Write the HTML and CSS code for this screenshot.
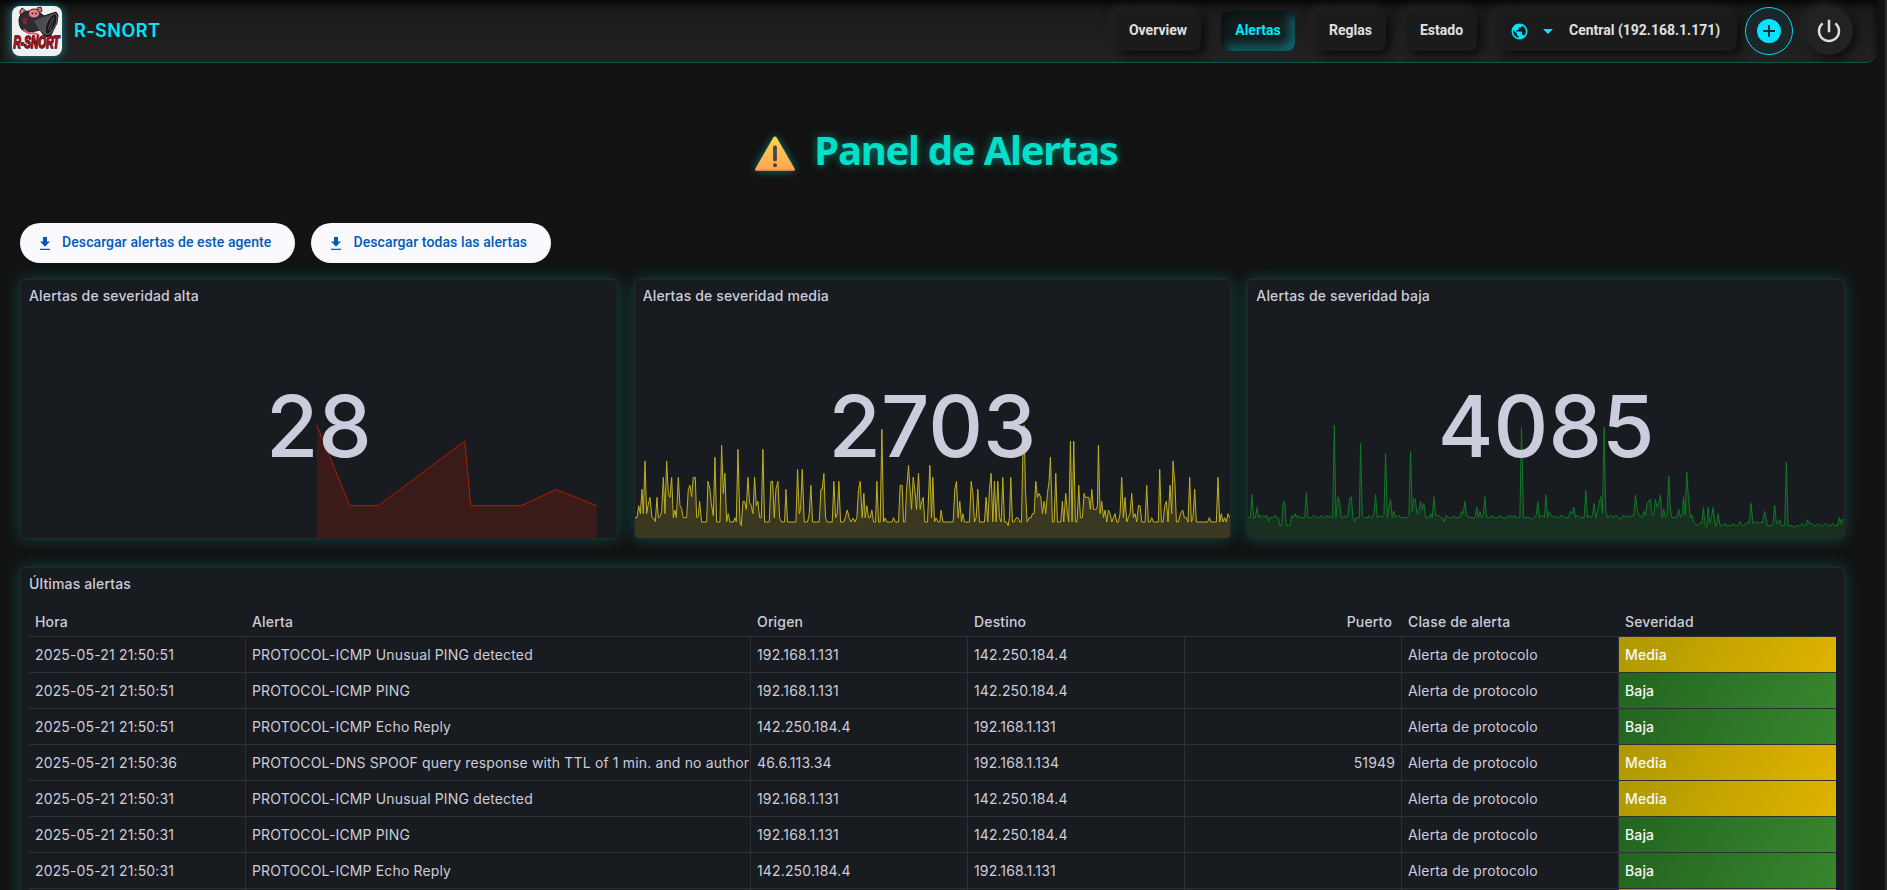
FILE: index.html
```html
<!DOCTYPE html>
<html lang="es">
<head>
<meta charset="utf-8">
<title>R-SNORT - Panel de Alertas</title>
<link rel="stylesheet" href="styles.css">
</head>
<body>
<header class="topbar">
  <div class="brand">
    <svg class="logo" viewBox="0 0 50 50" width="50" height="50">
      <path d="M8 5l2-3 4 3 2 3-6 2-2-2zM25 2l4-1 1 4-3 2z" fill="#e07078" stroke="#3a2428"/>
      <path d="M7 14c0-5 5-9 10-9l10 1 5 4 12-4 2 3-1 8-6 12-6 2-5-7-4 1-8 1c-6 0-9-5-9-12z" fill="#2c2b30" stroke="#151418"/>
      <ellipse cx="22" cy="7.500" rx="5.500" ry="4.500" fill="#e8808a" stroke="#3a2428"/>
      <circle cx="20.500" cy="7.500" r="1" fill="#50202c"/><circle cx="24" cy="7.500" r="1" fill="#50202c"/>
      <path d="M22 15l9-4 10-3-4 12-4 9-6-5z" fill="#4b4c52"/>
      <ellipse cx="39" cy="18" rx="4.500" ry="11" transform="rotate(24 39 18)" fill="#19191c" stroke="#62636a"/>
      <path d="M38 25l4-14M36 24l4-12" stroke="#55565c" stroke-width=".8"/>
      <path d="M11 12h4v6h-4z" fill="#8c2028"/>
      <path d="M12 23c1 3 5 5 9 4l6 2" fill="none" stroke="#d06068" stroke-width="2"/>
      <text class="logo-text" x="1.500" y="42" textLength="46" lengthAdjust="spacingAndGlyphs">R-SNORT</text>
    </svg>
    <span class="brand-name">R-SNORT</span>
  </div>
  <nav class="nav">
    <a class="nav-btn">Overview</a>
    <a class="nav-btn active">Alertas</a>
    <a class="nav-btn">Reglas</a>
    <a class="nav-btn">Estado</a>
  </nav>
  <div class="agent">
    <svg class="globe" viewBox="0 0 24 24" width="19" height="19"><path fill="#00e5ff" d="M12 2C6.480 2 2 6.480 2 12s4.480 10 10 10 10-4.480 10-10S17.520 2 12 2zm-1 17.930c-3.950-.49-7-3.850-7-7.930 0-.62.08-1.210.21-1.790L9 15v1c0 1.100.9 2 2 2v1.930zm6.900-2.540c-.26-.81-1-1.390-1.900-1.390h-1v-3c0-.55-.45-1-1-1H8v-2h2c.55 0 1-.45 1-1V7h2c1.100 0 2-.9 2-2v-.41c2.930 1.190 5 4.060 5 7.410 0 2.080-.8 3.970-2.100 5.390z"/></svg>
    <svg class="caret" viewBox="0 0 10 5" width="10" height="5"><path d="M0 0h10L5 5z" fill="#00e5ff"/></svg>
    <span>Central (192.168.1.171)</span>
  </div>
  <button class="round add"><svg viewBox="0 0 24 24" width="24" height="24"><circle cx="12" cy="12" r="12" fill="#00e5ff"/><path d="M12 6v12M6 12h12" stroke="#16282b" stroke-width="2"/></svg></button>
  <button class="round power"><svg viewBox="0 0 24 24" width="30" height="30"><path d="M13 3h-2v10h2V3zm4.830 2.170l-1.420 1.420C17.990 7.860 19 9.810 19 12c0 3.870-3.130 7-7 7s-7-3.130-7-7c0-2.190 1.010-4.140 2.580-5.420L6.170 5.170C4.230 6.820 3 9.260 3 12c0 4.970 4.030 9 9 9s9-4.030 9-9c0-2.740-1.230-5.180-3.170-6.830z" fill="#ddd"/></svg></button>
</header>

<main class="page">
  <h1 class="title">
    <svg class="warn" viewBox="0 0 40 36" width="40" height="36">
      <defs><linearGradient id="wg" x1="0" y1="0" x2="0" y2="1"><stop offset="0" stop-color="#ffd34f"/><stop offset="1" stop-color="#ffa652"/></linearGradient></defs>
      <path d="M20 .5c.8 0 1.300.4 1.700 1L39.600 32.500c.7 1.300 0 2.500-1.300 2.500H1.700C.4 35-.3 33.800.4 32.500L18.300 1.500c.4-.6.9-1 1.700-1z" fill="url(#wg)"/>
      <path d="M.3 33.500c.1.900.6 1.500 1.400 1.500h36.600c.8 0 1.300-.6 1.400-1.500z" fill="#d18a50"/>
      <rect x="18.100" y="9.500" width="3.800" height="15.800" rx="1.500" fill="#4a4450"/><circle cx="20" cy="29.300" r="2" fill="#4a4450"/>
    </svg>
    <span class="title-text">Panel de Alertas</span>
  </h1>

  <div class="downloads">
    <button class="dl"><svg viewBox="0 0 10 13" width="10" height="13"><path d="M3 0h4v4.500h3L5 9.700 0 4.500h3zM0 11.700h10V13H0z" fill="#005cbb"/></svg><span>Descargar alertas de este agente</span></button>
    <button class="dl"><svg viewBox="0 0 10 13" width="10" height="13"><path d="M3 0h4v4.500h3L5 9.700 0 4.500h3zM0 11.700h10V13H0z" fill="#005cbb"/></svg><span>Descargar todas las alertas</span></button>
  </div>

  <section class="stats">
    <article class="panel stat">
      <h2 class="panel-title">Alertas de severidad alta</h2>
      <svg class="spark red" viewBox="21 0 596 168" preserveAspectRatio="none">
        <path class="area" d="M317 168L317 55.300 350 135.700 378.500 135.700 465 71 471 135.700 521.500 135.700 556.500 119.500 597 135.700 597 168z"/>
        <path class="line" d="M317 55.300L350 135.700 378.500 135.700 465 71 471 135.700 521.500 135.700 556.500 119.500 597 135.700"/>
      </svg>
      <div class="value">28</div>
    </article>
    <article class="panel stat">
      <h2 class="panel-title">Alertas de severidad media</h2>
      <svg class="spark yellow" viewBox="15 0 1788 504" preserveAspectRatio="none">
        <path class="area line" d="M5 515L5 443 21 443 26 407 31 431 36 358 40 431 45 273 50 431 54 407 60 382 66 443 72 446 76 455 81 382 85 443 90 440 95 425 100 322 105 431 110 273 115 370 120 382 125 322 130 443 135 420 139 443 145 322 150 407 155 416 160 443 170 443 175 358 180 346 185 380 190 322 196 322 200 443 205 440 209 394 215 456 230 456 234 334 240 358 244 400 250 437 255 262 260 456 270 456 275 226 280 370 285 310 290 456 295 431 300 456 310 456 315 443 319 456 324 238 330 456 334 467 339 394 344 394 349 418 354 322 359 398 364 407 369 431 374 322 379 407 384 394 389 443 394 443 399 238 404 456 418 456 423 334 428 334 433 443 438 358 444 334 449 443 454 456 464 456 468 358 473 456 498 456 503 298 508 431 512 418 517 298 523 456 533 456 538 431 543 346 548 456 568 456 573 358 577 358 582 310 587 443 592 456 607 456 612 334 617 443 622 431 627 334 632 456 642 456 647 440 652 420 658 443 663 456 670 444 675 456 681 443 686 358 691 334 697 443 702 370 706 443 711 407 716 443 721 443 726 420 731 456 737 456 741 334 746 456 751 456 756 178 761 456 766 444 771 456 786 456 791 443 796 456 806 456 811 346 817 346 821 456 826 456 830 360 836 286 840 350 845 418 850 322 855 360 860 418 866 310 871 418 876 394 880 382 885 456 893 456 900 286 905 443 909 322 914 456 919 444 925 456 930 456 934 420 939 456 970 456 975 358 980 334 985 443 990 394 995 456 999 431 1004 456 1019 456 1024 334 1029 370 1034 456 1039 443 1044 358 1049 456 1064 456 1069 382 1074 456 1079 358 1084 310 1089 456 1094 334 1099 456 1104 334 1109 443 1114 456 1119 322 1124 456 1130 456 1135 467 1139 443 1143 322 1148 456 1153 456 1160 443 1165 444 1170 456 1175 456 1179 262 1183 166 1187 358 1192 456 1198 443 1204 443 1208 431 1213 431 1218 334 1223 382 1228 370 1233 382 1238 431 1243 394 1248 431 1253 370 1258 334 1262 262 1268 456 1273 456 1278 310 1283 456 1293 456 1298 394 1302 456 1308 370 1313 431 1317 456 1322 214 1327 456 1332 214 1337 456 1342 456 1347 346 1352 443 1358 443 1363 370 1367 382 1377 382 1382 418 1386 358 1391 418 1400 418 1403 407 1406 226 1411 431 1416 394 1421 443 1426 420 1431 456 1436 420 1441 431 1446 456 1456 431 1461 456 1466 456 1471 431 1476 322 1481 443 1486 382 1491 456 1496 443 1501 431 1506 370 1511 443 1516 431 1521 456 1526 407 1531 407 1536 456 1546 456 1551 346 1556 456 1561 456 1566 443 1571 456 1586 456 1590 298 1595 456 1600 456 1605 407 1610 394 1615 456 1621 346 1626 431 1630 273 1636 346 1640 456 1646 456 1652 431 1659 420 1664 443 1670 443 1675 456 1680 322 1685 456 1690 443 1695 358 1700 456 1734 456 1739 443 1744 456 1760 456 1765 322 1770 456 1775 431 1780 456 1785 443 1790 456 1795 431 1800 443 1812 443 1812 515z"/>
      </svg>
      <div class="value">2703</div>
    </article>
    <article class="panel stat">
      <h2 class="panel-title">Alertas de severidad baja</h2>
      <svg class="spark green" viewBox="24 0 1788 504" preserveAspectRatio="none">
        <path class="area line" d="M14 515L14 443 31 443 36 374 41 443 46 443 51 412 56 443 60 436 65 443 71 436 76 443 81 436 86 455 90 443 100 443 105 436 110 443 115 443 120 467 125 467 129 400 134 394 139 467 150 467 155 436 160 443 165 431 170 443 174 436 179 443 194 443 199 368 204 443 214 443 221 436 230 441 239 443 244 436 249 443 254 443 259 436 264 443 269 436 274 443 278 443 283 166 288 443 294 380 299 394 304 443 309 443 314 436 319 443 324 436 329 388 334 380 339 443 344 455 349 443 358 443 362 220 367 436 372 443 382 443 387 436 392 443 397 443 402 431 407 374 412 443 422 436 427 443 432 436 437 250 442 443 447 412 452 388 457 443 462 424 467 443 477 436 482 443 500 443 507 436 512 244 517 424 521 386 526 386 531 431 536 431 542 394 547 418 552 400 557 443 567 443 572 431 577 443 582 380 587 436 597 436 602 443 607 443 612 455 619 436 625 443 635 443 641 436 647 443 660 443 665 424 670 431 675 394 680 436 690 443 705 443 711 412 715 443 720 424 725 443 730 436 735 380 740 443 750 443 755 436 760 443 775 443 780 436 786 443 800 443 805 436 810 443 815 436 820 443 825 436 830 443 840 443 845 172 851 443 870 443 876 448 882 443 889 436 894 394 899 443 909 436 914 443 918 374 923 443 928 424 934 436 938 443 945 436 950 443 960 443 965 435 972 441 985 443 992 424 997 431 1002 412 1007 443 1013 436 1020 443 1033 443 1038 361 1043 443 1048 436 1053 443 1058 436 1063 400 1068 443 1073 424 1078 400 1083 380 1088 430 1093 172 1098 424 1103 443 1113 436 1120 443 1128 436 1136 443 1143 448 1150 436 1157 443 1166 436 1171 441 1182 436 1187 374 1193 424 1198 436 1207 443 1212 424 1217 436 1222 400 1231 388 1237 436 1242 436 1247 388 1252 412 1257 400 1262 374 1267 443 1272 418 1277 443 1282 436 1287 318 1292 424 1297 443 1310 443 1317 418 1322 443 1327 436 1331 380 1336 436 1341 306 1346 380 1352 443 1357 436 1362 455 1372 467 1380 460 1386 460 1391 412 1396 467 1401 473 1405 412 1410 460 1415 443 1420 412 1426 467 1430 467 1435 431 1441 467 1450 467 1456 460 1461 467 1476 467 1481 460 1486 467 1495 467 1501 455 1507 465 1512 467 1525 455 1529 460 1534 400 1540 460 1548 455 1558 460 1563 455 1568 460 1575 424 1583 467 1595 467 1600 460 1605 406 1610 460 1615 460 1620 449 1625 467 1635 467 1640 276 1645 467 1658 467 1665 473 1670 467 1680 467 1688 460 1693 467 1699 467 1703 449 1708 460 1716 460 1721 467 1730 467 1736 460 1743 467 1752 467 1758 460 1765 467 1773 467 1779 460 1785 467 1794 467 1799 443 1804 460 1808 449 1820 449 1820 515z"/>
      </svg>
      <div class="value">4085</div>
    </article>
  </section>

  <section class="panel table-panel">
    <h2 class="panel-title">Últimas alertas</h2>
    <div class="table">
      <div class="row head"><div>Hora</div><div>Alerta</div><div>Origen</div><div>Destino</div><div class="num">Puerto</div><div>Clase de alerta</div><div>Severidad</div></div>
      <div class="row"><div>2025-05-21 21:50:51</div><div>PROTOCOL-ICMP Unusual PING detected</div><div>192.168.1.131</div><div>142.250.184.4</div><div class="num"></div><div>Alerta de protocolo</div><div class="media">Media</div></div>
      <div class="row"><div>2025-05-21 21:50:51</div><div>PROTOCOL-ICMP PING</div><div>192.168.1.131</div><div>142.250.184.4</div><div class="num"></div><div>Alerta de protocolo</div><div class="baja">Baja</div></div>
      <div class="row"><div>2025-05-21 21:50:51</div><div>PROTOCOL-ICMP Echo Reply</div><div>142.250.184.4</div><div>192.168.1.131</div><div class="num"></div><div>Alerta de protocolo</div><div class="baja">Baja</div></div>
      <div class="row"><div>2025-05-21 21:50:36</div><div>PROTOCOL-DNS SPOOF query response with TTL of 1 min. and no author</div><div>46.6.113.34</div><div>192.168.1.134</div><div class="num">51949</div><div>Alerta de protocolo</div><div class="media">Media</div></div>
      <div class="row"><div>2025-05-21 21:50:31</div><div>PROTOCOL-ICMP Unusual PING detected</div><div>192.168.1.131</div><div>142.250.184.4</div><div class="num"></div><div>Alerta de protocolo</div><div class="media">Media</div></div>
      <div class="row"><div>2025-05-21 21:50:31</div><div>PROTOCOL-ICMP PING</div><div>192.168.1.131</div><div>142.250.184.4</div><div class="num"></div><div>Alerta de protocolo</div><div class="baja">Baja</div></div>
      <div class="row"><div>2025-05-21 21:50:31</div><div>PROTOCOL-ICMP Echo Reply</div><div>142.250.184.4</div><div>192.168.1.131</div><div class="num"></div><div>Alerta de protocolo</div><div class="baja">Baja</div></div>
      <div class="row"><div></div><div></div><div></div><div></div><div></div><div></div><div class="media"></div></div>
    </div>
  </section>
</main>
</body>
</html>
```
FILE: styles.css
```css
* { box-sizing: border-box; }
html { height: 890px; overflow: hidden; background: #121212; }
body {
  display: flex;
  flex-direction: column;
  margin: 0;
  height: 890px;
  overflow: hidden;
  border-right: 2px solid #2b2b2b;
  background: #121212;
  color: #ccccdc;
  font-family: Inter, sans-serif;
}

.topbar {
  display: flex;
  flex: none;
  align-items: center;
  width: 1877px;
  height: 63px;
  padding: 0 24px 0 12px;
  border-bottom: 1px solid #15505a;
  border-radius: 0 0 12px 0;
  background: linear-gradient(#1a1a1a, #222);
  box-shadow: inset 0 5px 8px -1px #050505;
}
.brand { display: flex; align-items: center; gap: 12px; margin-right: auto; }
.logo { border-radius: 8px; background: #f1f0f1; box-shadow: 0 0 8px rgba(0, 229, 255, .55); }
.logo-text {
  font: italic bold 16px "Liberation Sans", sans-serif;
  fill: #b01020;
  stroke: #2a0508;
  stroke-width: 1.5px;
  paint-order: stroke;
}
.brand-name { padding-bottom: 2px; color: #00e5ff; font-size: 18px; font-weight: 600; letter-spacing: .5px; }

.nav { display: flex; gap: 20px; margin-right: 20px; }
.nav-btn, .agent {
  display: flex;
  align-items: center;
  height: 40px;
  border-radius: 8px;
  background: #1b1b1b;
  box-shadow: 4px 4px 8px #0c0c0c, -4px -4px 8px #242424;
  color: #e0e0e0;
  font: 700 14px Roboto, sans-serif;
  white-space: nowrap;
}
.nav-btn { justify-content: center; width: 71px; padding-bottom: 2px; }
.nav-btn:first-child { width: 86px; }
.nav-btn.active {
  width: 74px;
  color: #00e5ff;
  background: #151c1d;
  box-shadow: inset 4px 4px 9px #070e0f, inset -4px -4px 12px #137680;
}
.agent { width: 240px; margin-right: 8px; padding: 0 14px 2px 13px; }
.globe { margin: 3px 14px 0 0; }
.caret { margin: 3px 16px 0 0; }
.round {
  display: flex;
  align-items: center;
  justify-content: center;
  width: 48px;
  height: 48px;
  padding: 0;
  border: 0;
  border-radius: 50%;
}
.add { margin-right: 12px; border: 1px solid #00d5ee; background: #1a2628; }
.power { background: #222; box-shadow: 4px 4px 8px #0e0e0e, -4px -4px 8px #262626; }

.page { flex: 1; min-height: 0; overflow: hidden; width: 1865px; padding: 0 20px; }
.title {
  display: flex;
  align-items: center;
  justify-content: center;
  gap: 19px;
  height: 58px;
  margin: 60px 0 42px;
  padding-left: 8px;
  color: #00dfc8;
  font: bold 40px "Noto Sans", "Open Sans", sans-serif;
  letter-spacing: -1.250px;
  text-shadow: 0 0 10px rgba(0, 223, 200, .5);
}
.title-text { padding-bottom: 5px; }
.warn { overflow: visible; margin-top: 3px; filter: drop-shadow(0 0 4px rgba(0, 223, 200, .5)); }

.downloads { display: flex; gap: 16px; }
.dl {
  display: flex;
  align-items: center;
  gap: 12px;
  height: 40px;
  padding: 0 24px 0 20px;
  border: 0;
  border-radius: 20px;
  background: #faf9fd;
  color: #005cbb;
  font: 500 14px Roboto, sans-serif;
  letter-spacing: .096px;
  white-space: nowrap;
}
.dl span { padding-bottom: 2px; }

.panel {
  border: 1px solid #25292e;
  border-radius: 5px;
  background: #181b1f;
  box-shadow: 0 0 16px rgba(0, 223, 200, .27);
}
.panel-title { margin: 0; font-size: 14px; font-weight: 500; line-height: 17px; letter-spacing: .15px; }
.stats { display: grid; grid-template-columns: repeat(3, 1fr); gap: 16px; margin-top: 16px; }
.stat {
  display: grid;
  grid-template: 90px 168px / 1fr;
  height: 260px;
  overflow: hidden;
}
.stat .panel-title { padding: 7px 8px; }
.spark { grid-area: 2 / 1; width: 100%; height: 168px; }
.area { stroke: none; }
.line { fill: none; stroke: currentColor; stroke-width: 1px; vector-effect: non-scaling-stroke; }
.red { color: #b31b00; }
.red .area { fill: #3b1b1a; }
.yellow { color: #bfb022; }
.yellow .area { fill: #3a3820; }
.green { color: #0f7a24; }
.green .area { fill: #182f21; }
.value {
  grid-area: 2 / 1;
  z-index: 1;
  margin-top: 5px;
  text-align: center;
  font-size: 85px;
  font-weight: 500;
  line-height: 104px;
}

.table-panel { height: 400px; margin-top: 28px; padding: 7px 8px; }
.table { margin-top: 19px; width: 1807px; }
.row {
  display: grid;
  grid-template-columns: 217px 505px repeat(5, 217px);
  height: 36px;
  font-size: 14px;
  letter-spacing: .15px;
}
.row > div {
  padding: 0 6px;
  overflow: hidden;
  white-space: nowrap;
  line-height: 36px;
  border-right: 1px solid #2c2f34;
  border-bottom: 1px solid #2c2f34;
}
.row > div:last-child { border-right: 0; }
.head { height: 26px; font-weight: 500; }
.head > div { border-right: 0; line-height: 22px; }
.row > .num { text-align: right; }
.head > .num { padding-right: 10px; }
.row > .media, .row > .baja { color: #f7f8fa; font-weight: 500; }
.media { background: linear-gradient(120deg, #ae9800, #e0b400) padding-box; }
.baja { background: linear-gradient(120deg, #236420, #37872d) padding-box; }
```
